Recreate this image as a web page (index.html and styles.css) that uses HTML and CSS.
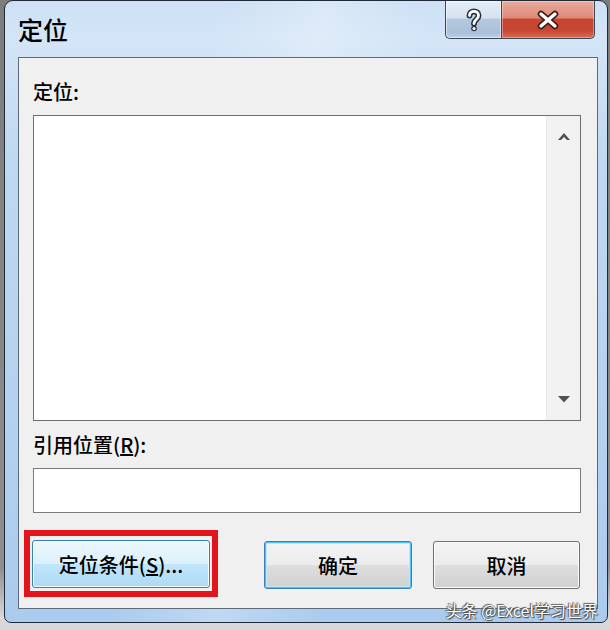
FILE: index.html
```html
<!DOCTYPE html>
<html lang="zh-CN">
<head>
  <meta charset="UTF-8">
  <title>定位</title>
  <meta name="viewport" content="width=device-width, initial-scale=1.0">
  <link rel="stylesheet" href="styles.css">
</head>
<body>
  <div class="window">
    <div class="titlebar">
      <span class="title">定位</span>
      <div class="caption-btns">
        <button class="cap help" title="帮助">
          <svg width="20" height="26" viewBox="-10 -13 20 26">
            <path class="glyph-back" d="M-4.5 -4.5 C-4.5 -10 4.5 -10 4.5 -4.5 C4.5 -0.5 0 -0.5 0 3.5"/>
            <circle cx="0" cy="8.5" r="2.8" fill="#2a3340"/>
            <path class="glyph-front" d="M-4.5 -4.5 C-4.5 -10 4.5 -10 4.5 -4.5 C4.5 -0.5 0 -0.5 0 3.5"/>
            <circle cx="0" cy="8.5" r="1.5" fill="#ffffff"/>
          </svg>
        </button>
        <button class="cap close" title="关闭">
          <svg width="26" height="20" viewBox="-13 -10 26 20">
            <path class="glyph-back" d="M-7 -6 L7 6 M7 -6 L-7 6"/>
            <path class="glyph-front x" d="M-7 -6 L7 6 M7 -6 L-7 6"/>
          </svg>
        </button>
      </div>
    </div>

    <div class="client">
      <label class="field-label">定位:</label>
      <div class="listbox">
        <div class="list-items"></div>
        <div class="scrollbar">
          <svg width="12" height="7" viewBox="0 0 12 7"><polygon points="0,7 6,0 12,7 9,7 6,4 3,7" fill="#505050"/></svg>
          <svg width="12" height="7" viewBox="0 0 12 7"><polygon points="0,0 12,0 6,6.5" fill="#505050"/></svg>
        </div>
      </div>

      <label class="field-label ref-label" for="ref">引用位置(<u>R</u>):</label>
      <input class="ref-input" type="text" id="ref">

      <div class="btn-row">
        <div class="highlight">
          <button class="btn special">定位条件(<u>S</u>)...</button>
        </div>
        <button class="btn default">确定</button>
        <button class="btn cancel">取消</button>
      </div>
    </div>

    <div class="watermark">头条 @Excel学习世界</div>
  </div>
</body>
</html>
```

FILE: styles.css
```css
* {
  box-sizing: border-box;
}

body {
  margin: 0;
  width: 610px;
  height: 630px;
  overflow: hidden;
  background: linear-gradient(#7c7c7c, #8e8e8e 90%, #d8d8d8 98%);
  font-family: "Noto Sans CJK SC", "Liberation Sans", sans-serif;
}

.window {
  position: relative;
  margin-left: 4px;
  width: 604px;
  height: 623px;
  border: 1px solid #1f2a36;
  border-radius: 9px 9px 7px 7px;
  padding: 0 9px 13px 13px;
  background: linear-gradient(100deg, rgba(255,255,255,0) 30%, rgba(255,255,255,0.25) 45%, rgba(255,255,255,0) 60%),
              linear-gradient(#cde0f5 0, #d4e5f7 6%, #c0d8f1 25%, #abcbee 100%);
}

/* title bar */
.titlebar {
  height: 56px;
  display: flex;
  justify-content: space-between;
  align-items: flex-start;
}
.title {
  margin-top: 16px;
  font-size: 25px;
  line-height: 25px;
  font-weight: 500;
  color: #000;
}
.caption-btns {
  display: flex;
  margin-right: 3px;
}
.cap {
  height: 38px;
  padding: 0;
  border: 1px solid #3b4858;
  border-top: none;
  display: flex;
  align-items: center;
  justify-content: center;
}
.cap.help {
  width: 56px;
  border-radius: 0 0 0 5px;
  border-right: none;
  background: linear-gradient(#e4edf7, #d5e2f0 45%, #b4c9df 50%, #aac0d9 85%, #bccfe3);
  box-shadow: inset 0 0 0 1px rgba(255,255,255,0.5);
}
.cap.close {
  width: 94px;
  border-radius: 0 0 5px 0;
  background: linear-gradient(#eaaa9c, #de8a78 45%, #c8442e 50%, #c54735 80%, #d96b52);
  box-shadow: inset 0 0 0 1px rgba(255,255,255,0.35);
}
.glyph-back {
  fill: none;
  stroke: #2a3340;
  stroke-width: 6;
  stroke-linecap: round;
}
.glyph-front {
  fill: none;
  stroke: #ffffff;
  stroke-width: 2.8;
  stroke-linecap: round;
}
.glyph-front.x {
  stroke-width: 3.4;
}
.close .glyph-back {
  stroke: #3a1a14;
  stroke-width: 6.5;
}

/* client area */
.client {
  height: 552px;
  border: 1px solid #5c6a7a;
  background: #f0f0f0;
  padding: 22px 16px 0 14px;
  display: flex;
  flex-direction: column;
}
.field-label {
  font-size: 20px;
  line-height: 24px;
  height: 24px;
  font-weight: 500;
  color: #000;
}
.listbox {
  margin-top: 11px;
  height: 306px;
  border: 1px solid #6e6e6e;
  background: #fff;
  display: flex;
}
.list-items {
  flex: 1;
}
.scrollbar {
  width: 34px;
  border-left: 1px solid #e8e8e8;
  background: #f2f2f2;
  display: flex;
  flex-direction: column;
  justify-content: space-between;
  align-items: center;
  padding: 17px 0 17px;
}
.ref-label {
  margin-top: 12px;
}
.ref-input {
  margin-top: 11px;
  height: 45px;
  width: 100%;
  border: 1px solid #7a7a7a;
  background: #fff;
  outline: none;
}

/* buttons */
.btn-row {
  margin-top: 17px;
  display: flex;
  align-items: flex-start;
}
.highlight {
  margin-left: -9px;
  border: 6px solid #e2151e;
  padding: 4px 2px 3px 2px;
}
.btn {
  height: 48px;
  padding: 0;
  font-family: "Noto Sans CJK SC", "Liberation Sans", sans-serif;
  font-size: 20px;
  font-weight: 500;
  color: #000;
  border: 1px solid #707070;
  border-radius: 3px;
  background: linear-gradient(#f3f3f3, #ececec 50%, #dedede 50%, #d0d0d0);
  box-shadow: inset 0 0 0 1px #fbfbfb;
}
.btn.special {
  display: block;
  width: 178px;
  border-color: #3c7fb1;
  background: linear-gradient(#ecf7fd, #dcf1fc 50%, #c1e6fc 50%, #acdaf5);
}
.btn.default {
  width: 148px;
  margin-left: 46px;
  margin-top: 11px;
  border-color: #3c7fb1;
  box-shadow: inset 0 0 0 1px #4cc3f5, inset 0 0 0 2px #bfe7fa;
}
.btn.cancel {
  width: 147px;
  margin-left: 21px;
  margin-top: 11px;
}

.watermark {
  position: absolute;
  right: 9px;
  bottom: 2px;
  font-size: 16px;
  line-height: 20px;
  color: #fff;
  text-shadow: 0 0 1px #333, 1px 1px 1px #444, -1px -1px 1px #666;
}
```
